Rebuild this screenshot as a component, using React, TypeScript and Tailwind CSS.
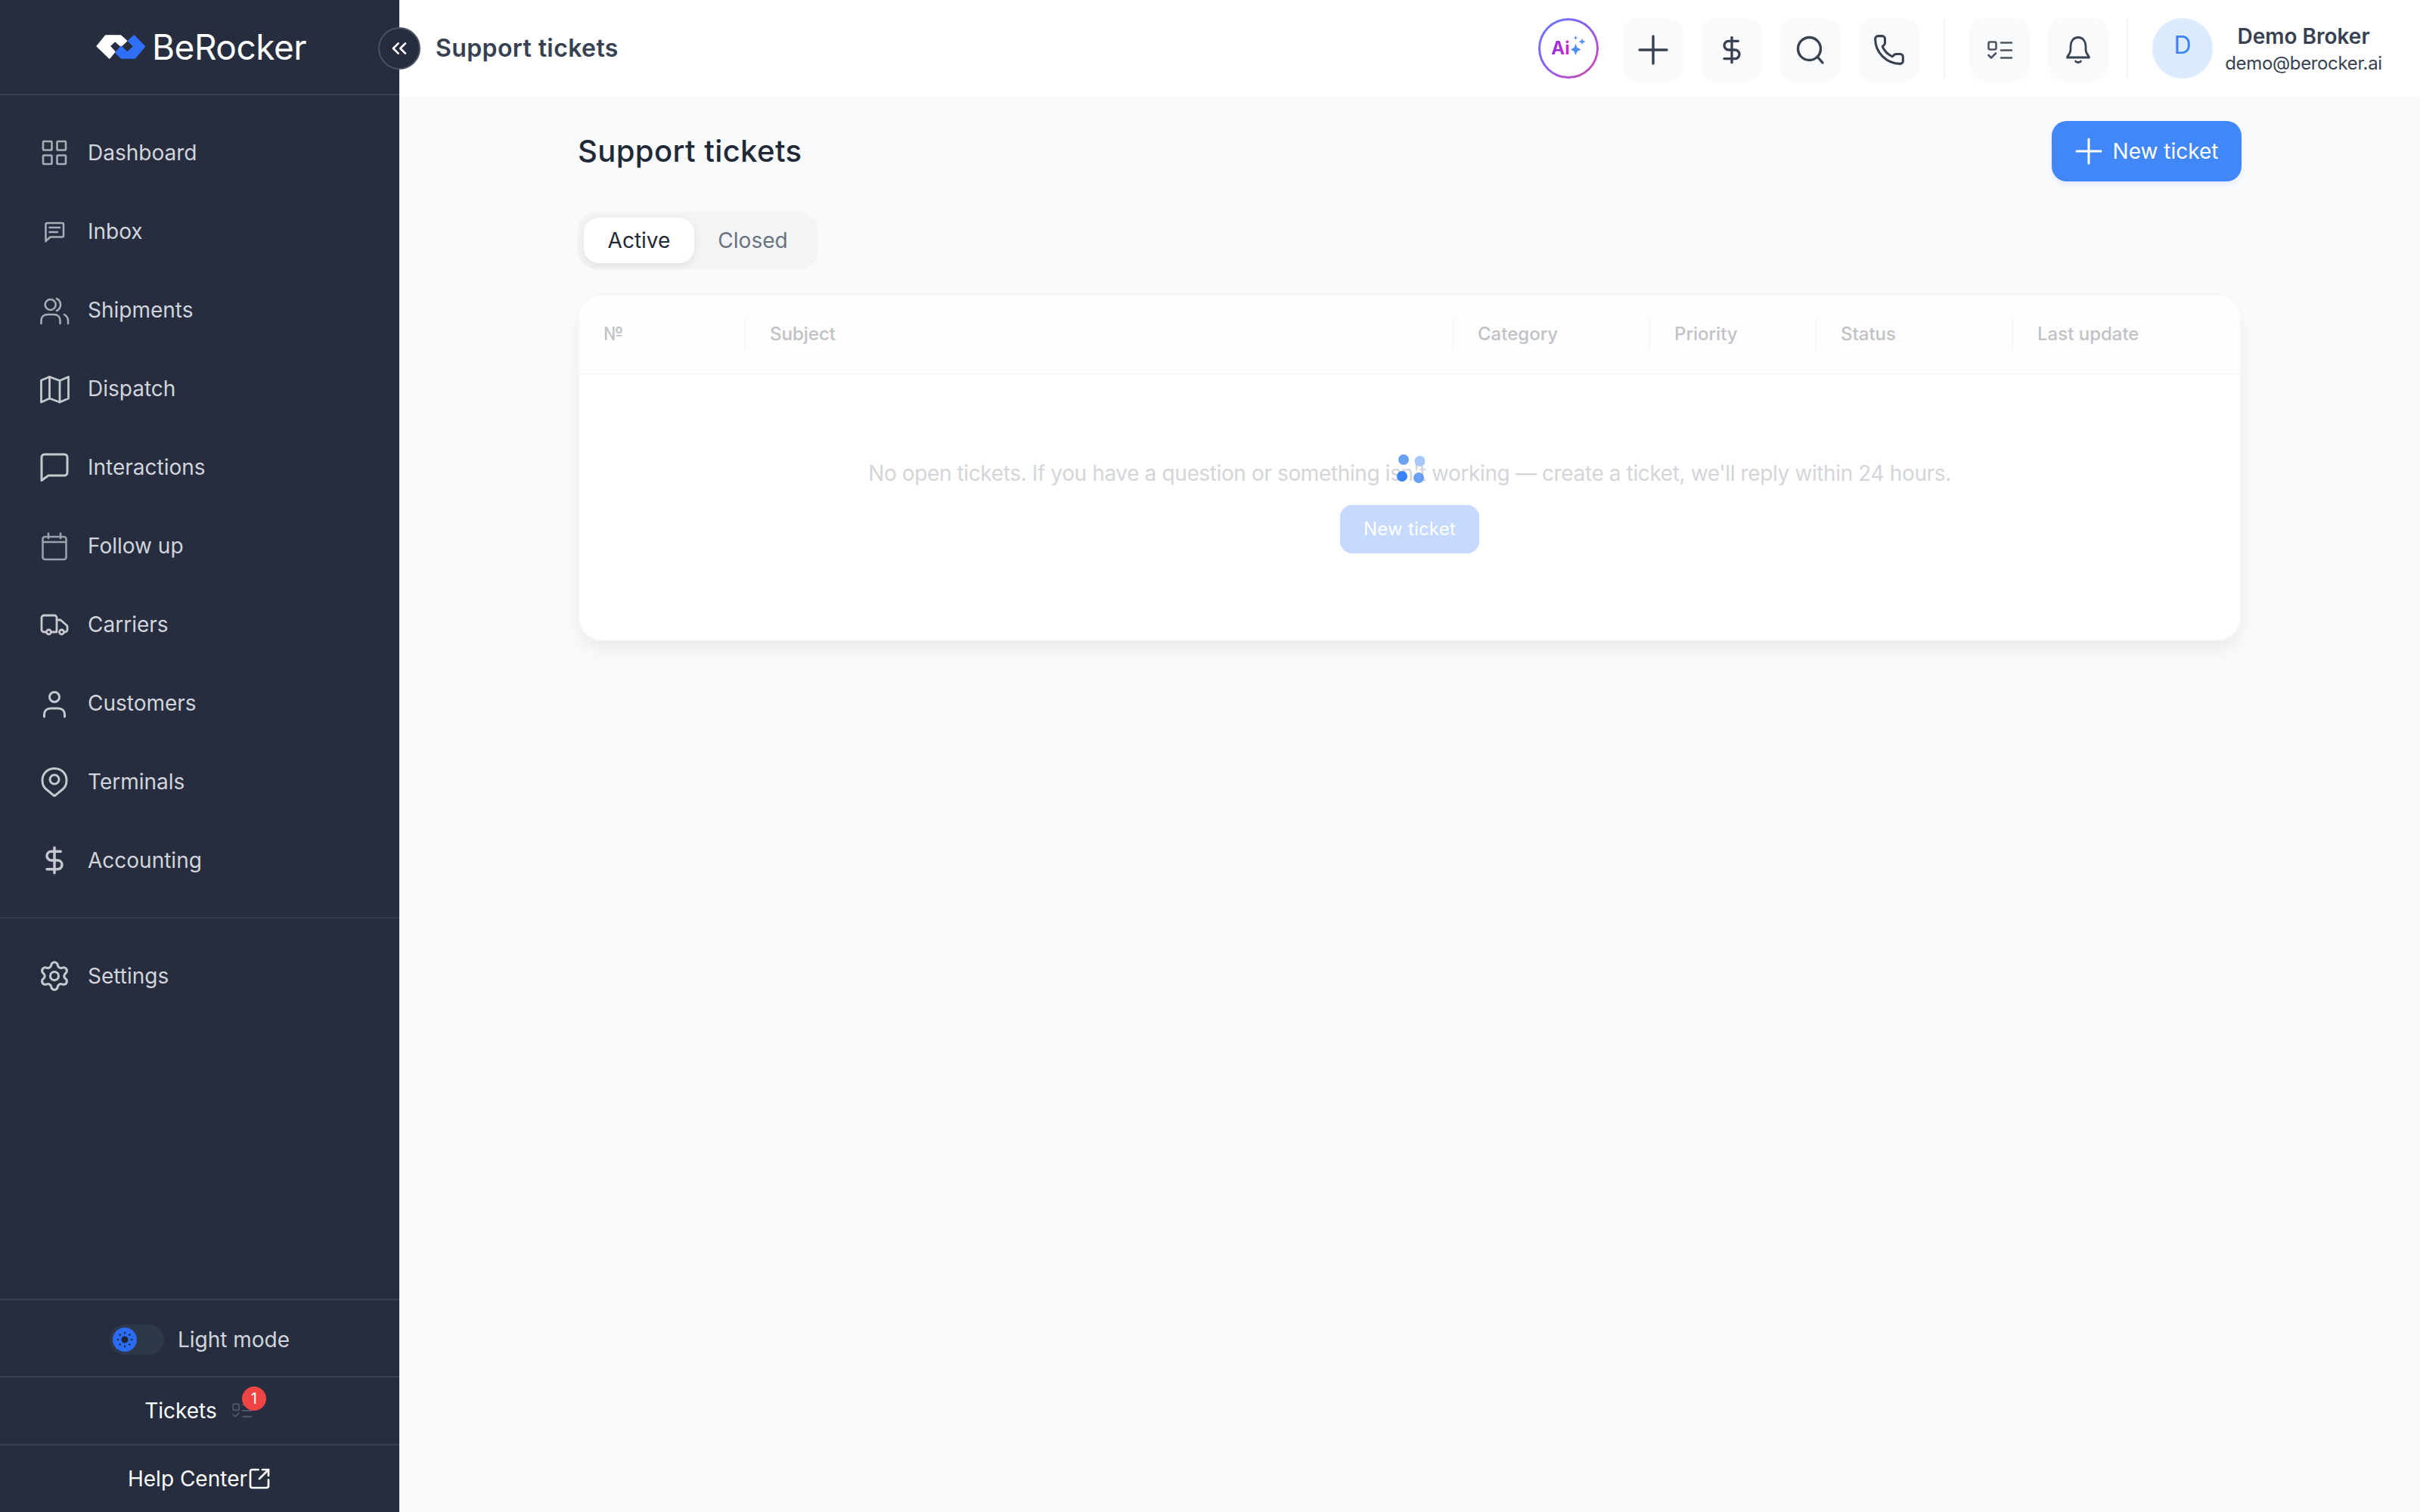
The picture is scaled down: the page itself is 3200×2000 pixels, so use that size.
import { ChevronsLeft, DollarSign, Phone, Settings, SquareArrowOutUpRight } from "lucide-react";
import type { ReactNode } from "react";

const Glyph = ({ children, sw = 2.8 }: { children: ReactNode; sw?: number }) => (
  <svg
    width="40"
    height="40"
    viewBox="0 0 40 40"
    fill="none"
    stroke="currentColor"
    strokeWidth={sw}
    strokeLinecap="round"
    strokeLinejoin="round"
  >
    {children}
  </svg>
);

const TasksIcon = ({ className }: { className: string }) => (
  <svg className={className} viewBox="0 0 33 25" fill="none" stroke="currentColor" strokeWidth="2.6" strokeLinecap="round" strokeLinejoin="round">
    <rect x="1.5" y="1.5" width="10" height="10" rx="2" />
    <path d="M18 2.5H32M18 12.5H32M18 22.5H32" />
    <path d="M1.5 19L5 22.5L11 16.5" />
  </svg>
);

const navItems: { label: string; tone: string; icon: ReactNode }[] = [
  {
    label: "Dashboard",
    tone: "text-[#a8acb4]",
    icon: (
      <Glyph sw={2.6}>
        <rect x="5" y="5" width="11.5" height="11.5" rx="1" />
        <rect x="23.5" y="5" width="11.5" height="11.5" rx="1" />
        <rect x="5" y="23.5" width="11.5" height="11.5" rx="1" />
        <rect x="23.5" y="23.5" width="11.5" height="11.5" rx="1" />
      </Glyph>
    ),
  },
  {
    label: "Inbox",
    tone: "text-[#a8acb4]",
    icon: (
      <Glyph sw={2.6}>
        <path d="M8.5 33V11a2 2 0 0 1 2-2H30a2 2 0 0 1 2 2V25.5a2 2 0 0 1-2 2H14.5Z" />
        <path d="M13.5 15H27M13.5 21H24" />
      </Glyph>
    ),
  },
  {
    label: "Shipments",
    tone: "text-[#a8acb4]",
    icon: (
      <Glyph sw={2.6}>
        <circle cx="14.7" cy="13" r="7" />
        <path d="M23 5C26 6.5 28 9.5 28 13C28 16 26 19.5 23 21" />
        <path d="M2.5 38V34C2.5 29 6 26 11 26H19C24 26 27.5 29 27.5 34V38" />
        <path d="M33 26C36 28 38 31 38 34V38" />
      </Glyph>
    ),
  },
  {
    label: "Dispatch",
    tone: "text-[#c5c8cd]",
    icon: (
      <Glyph>
        <path d="M2.5 9L13.5 4.5L27 9.5L38.5 4.5V33L27 38L13.5 33L2.5 38Z" />
        <path d="M13.5 4.5V33M27 9.5V38" />
      </Glyph>
    ),
  },
  {
    label: "Interactions",
    tone: "text-[#c5c8cd]",
    icon: (
      <Glyph sw={3}>
        <path d="M3 37.5V7a4 4 0 0 1 4-4H33a4 4 0 0 1 4 4V27a4 4 0 0 1-4 4H12Z" />
      </Glyph>
    ),
  },
  {
    label: "Follow up",
    tone: "text-[#9aa0aa]",
    icon: (
      <Glyph sw={2.6}>
        <rect x="4.5" y="8" width="31" height="30" rx="3" />
        <path d="M4.5 15H35.5M12 3.5V10M28 3.5V10" />
      </Glyph>
    ),
  },
  {
    label: "Carriers",
    tone: "text-[#c5c8cd]",
    icon: (
      <Glyph>
        <path d="M9.5 30H6a3 3 0 0 1-3-3V11a3 3 0 0 1 3-3H20a3 3 0 0 1 3 3V30H16" />
        <path d="M23 14H28L36 21a2 2 0 0 1 1 2V27a3 3 0 0 1-3 3H33" />
        <circle cx="12.5" cy="30" r="3" />
        <circle cx="29.5" cy="30" r="3" />
      </Glyph>
    ),
  },
  {
    label: "Customers",
    tone: "text-[#c5c8cd]",
    icon: (
      <Glyph sw={3}>
        <circle cx="20" cy="12" r="6.5" />
        <path d="M6.5 38V35C6.5 30 10 27 15 27H25C30 27 33.5 30 33.5 35V38" />
      </Glyph>
    ),
  },
  {
    label: "Terminals",
    tone: "text-[#c5c8cd]",
    icon: (
      <Glyph sw={3}>
        <path d="M20 39L8 29C5 26 4 22 4 18C4 9 11 2.5 20 2.5C29 2.5 36 9 36 18C36 22 35 26 32 29Z" />
        <circle cx="20" cy="17" r="6" />
      </Glyph>
    ),
  },
  {
    label: "Accounting",
    tone: "text-[#c5c8cd]",
    icon: <DollarSign size={40} strokeWidth={2.1} />,
  },
];

const NavRow = ({ label, tone, icon }: { label: string; tone: string; icon: ReactNode }) => (
  <div className="flex h-[104px] items-center gap-6 pl-[52px]">
    <span className={`flex h-10 w-10 shrink-0 items-center justify-center ${tone}`}>{icon}</span>
    <span className="text-[28px] text-[#d1d5db]">{label}</span>
  </div>
);

const Sidebar = () => (
  <aside className="flex h-full w-[528px] shrink-0 flex-col bg-[#252d3f]">
    <div className="flex h-[126px] items-center justify-center gap-2 border-b-2 border-[#3a4252] pl-[4px]">
      <svg width="66" height="34" viewBox="8 8 67 33" className="shrink-0">
        <path
          d="M9.5 23.5L21 9.5H41L49 16.5L41.5 23.5L33.5 16.5L26 23.5L33 31L26 39.5Z"
          fill="#ffffff"
          stroke="#ffffff"
          strokeWidth="2"
          strokeLinejoin="round"
        />
        <path
          d="M73 24L59 9.5L51.5 16.5L59 24L50 32L41.5 24L34.5 32.5L42 39.5H60Z"
          fill="#2f6ff6"
          stroke="#2f6ff6"
          strokeWidth="2"
          strokeLinejoin="round"
        />
      </svg>
      <span className="text-[46px] leading-none tracking-[-0.5px] text-white">BeRocker</span>
    </div>
    <nav className="border-b-2 border-[#333b4c] pt-[24px] pb-[23px]">
      {navItems.map((item) => (
        <NavRow key={item.label} {...item} />
      ))}
    </nav>
    <div className="flex-1 pt-[24px]">
      <NavRow label="Settings" tone="text-[#c5c8cd]" icon={<Settings size={44} strokeWidth={1.7} className="shrink-0" />} />
    </div>
    <div className="flex h-[104px] items-center justify-center gap-[18px] border-y-2 border-[#3a4252] pt-1">
      <div className="flex h-10 w-[72px] items-center rounded-full bg-[#2f3849] px-1">
        <span className="flex h-8 w-8 items-center justify-center rounded-full bg-[#2a6cf6]">
          <svg width="24" height="24" viewBox="0 0 24 24" fill="#1f2737" stroke="#1f2737" strokeWidth="2" strokeLinecap="round">
            <circle cx="12" cy="12" r="4.5" stroke="none" />
            <path d="M12 2.5V3.5M12 20.5V21.5M2.5 12H3.5M20.5 12H21.5M5.3 5.3L6 6M18 18L18.7 18.7M5.3 18.7L6 18M18 6L18.7 5.3" />
          </svg>
        </span>
      </div>
      <span className="text-[28px] text-[#d1d5db]">Light mode</span>
    </div>
    <div className="flex h-[88px] items-center justify-center gap-5 pr-[4px]">
      <span className="text-[28px] text-white">Tickets</span>
      <span className="relative flex">
        <TasksIcon className="h-[22px] w-[26px] text-[#4b5563]" />
        <span className="absolute -top-[21px] left-[13px] flex h-8 w-8 items-center justify-center rounded-full bg-[#ef4444] text-[20px] text-white">
          1
        </span>
      </span>
    </div>
    <div className="flex h-[90px] items-center justify-center gap-0 border-t-2 border-[#3a4252]">
      <span className="text-[28px] text-white">Help Center</span>
      <SquareArrowOutUpRight size={32} strokeWidth={2} className="text-white" />
    </div>
  </aside>
);

const HeaderButton = ({ children }: { children: ReactNode }) => (
  <button className="flex h-[84px] w-20 items-center justify-center rounded-[20px] bg-[#f9fafb] text-[#374151]">
    {children}
  </button>
);

const Topbar = () => (
  <header className="flex h-[128px] shrink-0 items-start bg-white pt-6 pl-[48px]">
    <div className="flex h-20 items-center text-[32px] font-semibold tracking-[0.4px] text-[#374151]">Support tickets</div>
    <div className="ml-auto flex items-start">
      <div className="flex h-20 w-20 items-center justify-center rounded-full bg-linear-to-br from-[#5b7bff] via-[#8f5bea] to-[#d53fa8] p-[3px]">
        <div className="flex h-full w-full items-center justify-center gap-[1px] rounded-full bg-white">
          <span className="bg-linear-to-r from-[#8b2fe0] to-[#db1fc8] bg-clip-text text-[24px] font-bold text-transparent">
            Ai
          </span>
          <svg width="20" height="26" viewBox="0 0 20 26" fill="#4d8df8" className="-mt-2">
            <path d="M6.5 11L8.5 16L13.5 18.5L8.5 21L6.5 26L4.5 21L0 18.5L4.5 16Z" />
            <path d="M15 3.5L16 6.5L19.5 8L16 9.5L15 12.5L14 9.5L10.5 8L14 6.5Z" />
            <path d="M6.5 0L7.3 2.2L9.5 3L7.3 3.8L6.5 6L5.7 3.8L3.5 3L5.7 2.2Z" />
          </svg>
        </div>
      </div>
      <div className="ml-8 flex gap-6">
        <HeaderButton>
          <svg width="40" height="40" viewBox="0 0 40 40" fill="none" stroke="currentColor" strokeWidth="3.4" strokeLinecap="round">
            <path d="M20 2V38M2 20H38" />
          </svg>
        </HeaderButton>
        <HeaderButton>
          <DollarSign size={40} strokeWidth={2} />
        </HeaderButton>
        <HeaderButton>
          <svg width="40" height="40" viewBox="0 0 40 40" fill="none" stroke="currentColor" strokeWidth="3.4" strokeLinecap="round">
            <circle cx="18.5" cy="18.5" r="15" />
            <path d="M30 30L36 37" />
          </svg>
        </HeaderButton>
        <HeaderButton>
          <Phone size={44} strokeWidth={1.7} />
        </HeaderButton>
      </div>
      <div className="mx-8 h-20 w-[2px] bg-[#f3f4f6]" />
      <div className="flex gap-6">
        <HeaderButton>
          <TasksIcon className="h-[25px] w-[33px] text-[#4b5563]" />
        </HeaderButton>
        <HeaderButton>
          <svg width="32" height="36" viewBox="0 0 32 36" fill="none" stroke="currentColor" strokeWidth="2.8" strokeLinecap="round" strokeLinejoin="round">
            <path d="M16 1.5C9.5 1.5 6 7 6 13V18C6 23 2 25 1.5 28H30.5C30 25 26 23 26 18V13C26 7 22.5 1.5 16 1.5Z" />
            <path d="M12.5 33C14 35 18 35 19.5 33" />
          </svg>
        </HeaderButton>
      </div>
      <div className="mx-6 h-20 w-[2px] bg-[#f3f4f6]" />
      <div className="ml-2 flex h-20 w-20 items-center justify-center rounded-full bg-[#dbeafe] pb-2 text-[32px] text-[#3b82f6]">
        D
      </div>
      <div className="mr-[50px] ml-4 flex w-[208px] flex-col items-center">
        <span className="mt-[6px] text-[28px] leading-9 font-semibold text-[#374151]">Demo Broker</span>
        <span className="text-[24px] leading-9 tracking-[-0.35px] text-[#374151]">demo@berocker.ai</span>
      </div>
    </div>
  </header>
);

const columns = [
  { label: "№", width: "w-[218px]" },
  { label: "Subject", width: "w-[936px]" },
  { label: "Category", width: "w-[260px]" },
  { label: "Priority", width: "w-[220px]" },
  { label: "Status", width: "w-[260px]" },
  { label: "Last update", width: "flex-1" },
];

const TicketsCard = () => (
  <div className="relative mt-8 rounded-[32px] border-2 border-[#f5f6f7] bg-white shadow-[0_14px_24px_-4px_rgba(0,0,0,0.07)]">
    <div className="flex h-[106px] items-center rounded-t-[30px] border-b-2 border-[#f8f8f9] bg-[#fdfdfe]">
      {columns.map((col, i) => (
        <div key={col.label} className={`${col.width} flex h-10 items-center px-8 text-[24px] font-medium text-[#c0c2c6] ${i > 0 ? "border-l-2 border-[#f6f7f8]" : ""}`}>
          {col.label}
        </div>
      ))}
    </div>
    <div className="flex flex-col items-center gap-5 pt-[108px] pb-[114px]">
      <p className="text-[28px] leading-[44px] tracking-[-0.38px] text-[#d4d5d9]">
        No open tickets. If you have a question or something isn't working — create a ticket, we'll reply within 24 hours.
      </p>
      <button className="flex h-16 w-[184px] items-center justify-center rounded-[16px] bg-[#c6daff] text-[24px] tracking-[0.2px] text-white">
        New ticket
      </button>
    </div>
    <svg width="40" height="40" viewBox="0 0 40 40" className="absolute top-[210px] left-[1078px]" fill="#3b82f6">
      <circle cx="12" cy="8" r="7" opacity="0.75" />
      <circle cx="33.5" cy="10" r="7" opacity="0.45" />
      <circle cx="10" cy="30" r="7" />
      <circle cx="32" cy="32" r="7" opacity="0.75" />
    </svg>
  </div>
);

export default function App() {
  return (
    <div className="flex h-screen w-full overflow-hidden font-['Inter',sans-serif]">
      <div className="relative h-full shrink-0">
        <Sidebar />
        <button className="absolute top-9 left-[500px] z-10 flex h-14 w-14 items-center justify-center rounded-full border-2 border-[#4b5362] bg-[#252d3f] text-white">
          <ChevronsLeft size={32} strokeWidth={2} />
        </button>
      </div>
      <main className="flex min-w-0 flex-1 flex-col bg-[#f9fafb]">
        <Topbar />
        <section className="mx-auto w-[2200px] pt-8">
          <div className="flex items-center justify-between">
            <h1 className="text-[40px] font-medium tracking-[0.4px] text-[#1f2937]">Support tickets</h1>
            <button className="flex h-20 w-[251px] items-center justify-center gap-[14px] rounded-[20px] bg-[#4287f8] text-[28px] text-white shadow-[0_4px_6px_rgba(59,130,246,0.1)]">
              <svg width="36" height="36" viewBox="0 0 36 36" fill="none" stroke="currentColor" strokeWidth="3" strokeLinecap="round">
                <path d="M18 2V34M2 18H34" />
              </svg>
              New ticket
            </button>
          </div>
          <div className="mt-10 inline-flex h-[76px] items-center rounded-[24px] bg-[#f3f4f6] p-2">
            <button className="h-[60px] w-[146px] rounded-[20px] bg-white text-[28px] text-[#1f2937] shadow-[0_4px_12px_rgba(0,0,0,0.08)]">
              Active
            </button>
            <button className="h-[60px] w-[155px] text-[28px] text-[#6b7280]">Closed</button>
          </div>
          <TicketsCard />
        </section>
      </main>
    </div>
  );
}
